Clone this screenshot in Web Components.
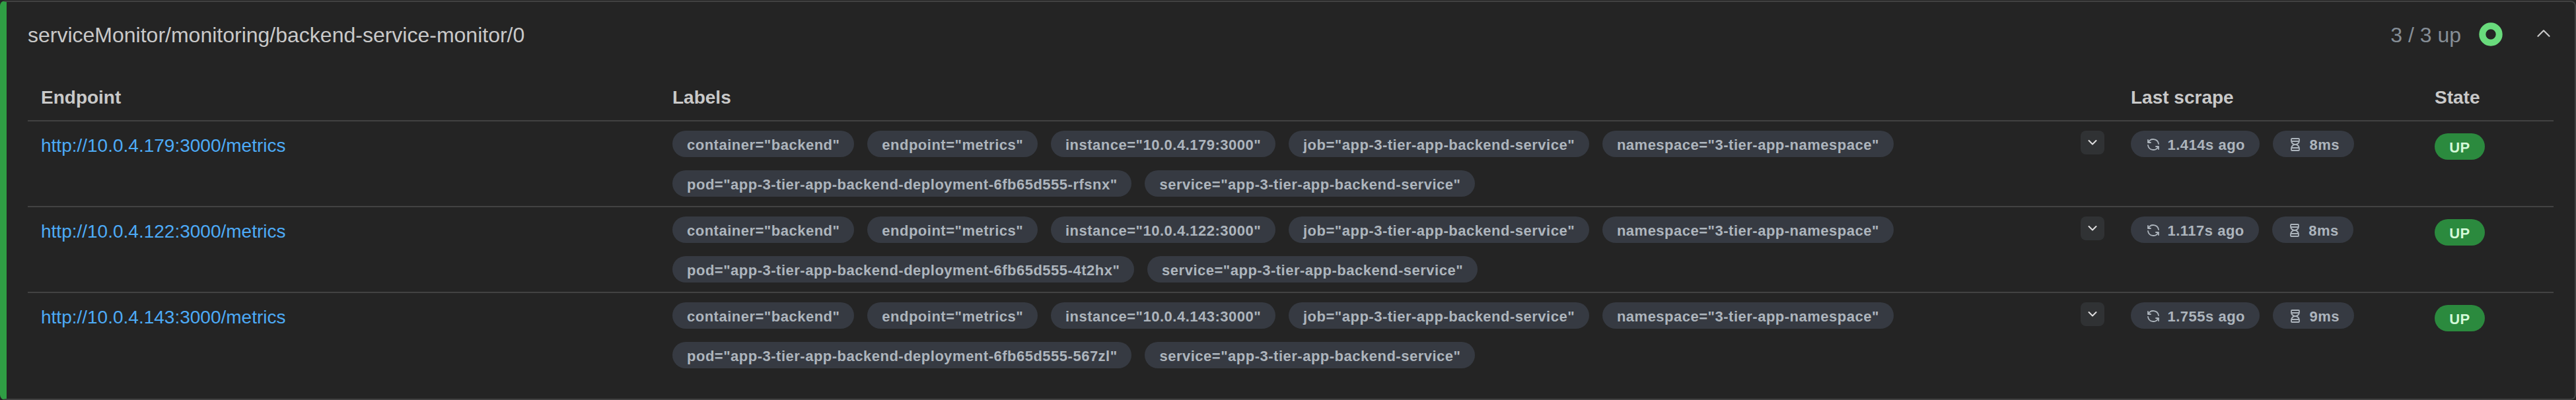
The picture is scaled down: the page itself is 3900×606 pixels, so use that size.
<!DOCTYPE html>
<html lang="en"><head><meta charset="utf-8"><title>Target health</title>
<style>
html,body{margin:0;background:#242424}
body{font-family:"Liberation Sans",Arial,sans-serif;color:#c9c9c9;height:606px;overflow:hidden}
</style></head><body>
<target-pool name="serviceMonitor/monitoring/backend-service-monitor/0" summary="3 / 3 up"></target-pool>
<script>
const define=(n,html,setup)=>customElements.define(n,class extends HTMLElement{
 connectedCallback(){ if(this.shadowRoot)return; const r=this.attachShadow({mode:'open'});
  const t=document.createElement('template'); t.innerHTML=html; r.append(t.content.cloneNode(true)); if(setup)setup(this,r);} });

define('label-badge',`<style>
:host{display:flex;box-sizing:border-box;height:40px;border-radius:20px;padding:3px 21.8px 0 22px;align-items:center;background:#363a42;color:#adb5bd;font-size:22px;font-weight:700;letter-spacing:.5px;white-space:nowrap;line-height:37px}
</style><slot></slot>`);
define('scrape-badge',`<style>
:host{display:flex;box-sizing:border-box;height:40px;border-radius:20px;align-items:center;background:#363a42;color:#adb5bd;font-size:22px;font-weight:700;letter-spacing:.5px;white-space:nowrap;padding:0 22px}
svg{width:24px;height:24px;margin:2px 9.5px 0 0;fill:none;stroke:currentColor;stroke-width:1.8;stroke-linecap:round;stroke-linejoin:round}
span{padding-top:3px;line-height:25px}
</style><svg viewBox="0 0 24 24"></svg><span><slot></slot></span>`,(h,r)=>{
 r.querySelector('svg').innerHTML=h.getAttribute('icon')==='refresh'
 ?'<path d="M20 11a8.1 8.1 0 0 0 -15.5 -2m-.5 -4v4h4"/><path d="M4 13a8.1 8.1 0 0 0 15.5 2m.5 4v-4h-4"/>'
 :'<path d="M6.5 7h11"/><path d="M6.5 17h11"/><path d="M6 20v-2a6 6 0 1 1 12 0v2a1 1 0 0 1 -1 1h-10a1 1 0 0 1 -1 -1z"/><path d="M6 4v2a6 6 0 1 0 12 0v-2a1 1 0 0 0 -1 -1h-10a1 1 0 0 0 -1 1z"/>';
});
define('state-badge',`<style>:host{display:flex;box-sizing:border-box;width:76px;height:40px;border-radius:20px;align-items:center;justify-content:center;padding-top:3px;background:#2b8a3e;color:#d3f9d8;font-size:22px;font-weight:700;letter-spacing:.5px}</style><slot></slot>`);
define('expand-button',`<style>:host{display:flex;width:36px;height:36px;border-radius:8px;background:#303234;align-items:center;justify-content:center;color:#e0e0e0}svg{width:14px;height:10px;fill:none;stroke:currentColor;stroke-width:2;stroke-linecap:round;stroke-linejoin:round}</style><svg viewBox="0 0 14 10"><path d="M1.5 2L7 7.5L12.5 2"/></svg>`);
define('target-row',`<style>
:host{display:grid;box-sizing:border-box;height:130px;grid-template-columns:956px 2132px 76px 460px auto;border-top:2px solid #424242;padding-left:20px}
a{color:#4dabf7;font-size:28px;line-height:45px;padding-top:14px;text-decoration:none}
.labels{display:flex;flex-wrap:wrap;gap:20px;align-content:flex-start;padding-top:14px;max-width:2000px}
.scrape{display:flex;gap:20px;align-items:flex-start;padding-top:14px}
expand-button{margin-top:14px}
state-badge{margin-top:18px}
</style><a></a><div class="labels"></div><expand-button></expand-button><div class="scrape"><scrape-badge icon="refresh"></scrape-badge><scrape-badge icon="hourglass"></scrape-badge></div><state-badge>UP</state-badge>`,(h,r)=>{
 const ip=h.getAttribute('ip');
 r.querySelector('a').textContent=`http://${ip}:3000/metrics`;
 for(const t of ['container="backend"','endpoint="metrics"',`instance="${ip}:3000"`,'job="app-3-tier-app-backend-service"','namespace="3-tier-app-namespace"',`pod="app-3-tier-app-backend-deployment-6fb65d555-${h.getAttribute('pod')}"`,'service="app-3-tier-app-backend-service"']){
  const b=document.createElement('label-badge');b.textContent=t;r.querySelector('.labels').append(b);}
 const s=r.querySelectorAll('scrape-badge');s[0].append(h.getAttribute('ago'));s[1].append(h.getAttribute('took'));
});
define('target-pool',`<style>
:host{display:block;box-sizing:border-box;height:605px;margin-top:1px;border:2px solid #424242;border-left:10px solid #2f9e44;border-radius:8px;padding:0 32px}
header{display:flex;height:100px;align-items:center;font-size:32px}
.sum{margin-left:auto;color:#868e96}
.ring{width:36px;height:36px;margin:0 52px 2px 27px}
.up{width:20px;height:14px;margin:0 5px 5px 0}
svg{display:block;fill:none}
.head{display:grid;grid-template-columns:956px 2208px 460px auto;height:79px;padding-left:20px;font-size:28px;font-weight:700;line-height:89px}
</style>
<header><span class="name"></span><span class="sum"></span>
<svg class="ring" viewBox="0 0 36 36"><circle cx="18" cy="18" r="12.7" stroke="#69db7c" stroke-width="10"/></svg>
<svg class="up" viewBox="0 0 20 14"><path d="M1.5 10.8L10 2.3L18.5 10.8" stroke="#c9c9c9" stroke-width="2.2" stroke-linecap="round" stroke-linejoin="round"/></svg></header>
<div class="head"><span>Endpoint</span><span>Labels</span><span>Last scrape</span><span>State</span></div>
<target-row ip="10.0.4.179" pod="rfsnx" ago="1.414s ago" took="8ms"></target-row>
<target-row ip="10.0.4.122" pod="4t2hx" ago="1.117s ago" took="8ms"></target-row>
<target-row ip="10.0.4.143" pod="567zl" ago="1.755s ago" took="9ms"></target-row>`,(h,r)=>{r.querySelector('.name').textContent=h.getAttribute('name');r.querySelector('.sum').textContent=h.getAttribute('summary')});
</script></body></html>
